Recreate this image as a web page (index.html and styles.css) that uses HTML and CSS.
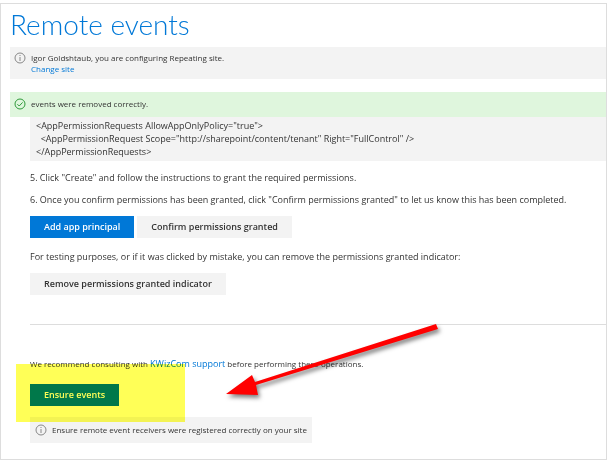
FILE: index.html
```
<!DOCTYPE html>
<html lang="en">
<head>
    <meta charset="UTF-8">
    <meta name="viewport" content="width=device-width, initial-scale=1.0">
    <title>Remote events</title>
    <link rel="stylesheet" href="styles.css">
</head>
<body>
    <main class="page">
        <h1>Remote events</h1>

        <!-- Messages -->
        <div class="message info">
            <svg class="icon" viewBox="0 0 12 12">
                <circle cx="6" cy="6" r="5" />
                <path d="M6 5v4M6 3v1" />
            </svg>
            <div>
                Igor Goldshtaub, you are configuring Repeating site.<br>
                <a href="#">Change site</a>
            </div>
        </div>
        <div class="message success">
            <svg class="icon" viewBox="0 0 12 12">
                <circle cx="6" cy="6" r="5" />
                <path d="M3.4 6.2l1.8 1.8 3.4-3.6" />
            </svg>
            <div>events were removed correctly.</div>
        </div>

        <!-- Permission steps -->
        <div class="content">
            <pre class="code">&lt;AppPermissionRequests AllowAppOnlyPolicy="true"&gt;
  &lt;AppPermissionRequest Scope="http://sharepoint/content/tenant" Right="FullControl" /&gt;
&lt;/AppPermissionRequests&gt;</pre>
            <p>5. Click "Create" and follow the instructions to grant the required permissions.</p>
            <p>6. Once you confirm permissions has been granted, click "Confirm permissions granted" to let us know this has been completed.</p>
            <div class="buttons">
                <button type="button" class="primary">Add app principal</button>
                <button type="button">Confirm permissions granted</button>
            </div>
            <p>For testing purposes, or if it was clicked by mistake, you can remove the permissions granted indicator:</p>
            <div class="buttons">
                <button type="button">Remove permissions granted indicator</button>
            </div>
            <hr>

            <!-- Support operations -->
            <div class="operations">
                <p class="recommend">We recommend consulting with <a href="#">KWizCom support</a> before performing these operations.</p>
                <button type="button" class="primary">Ensure events</button>
                <div class="hint">
                    <svg class="icon" viewBox="0 0 12 12">
                        <circle cx="6" cy="6" r="5" />
                        <path d="M6 5v4M6 3v1" />
                    </svg>
                    <span>Ensure remote event receivers were registered correctly on your site</span>
                </div>
                <div class="marker"></div>
                <svg class="arrow" viewBox="0 0 220 76">
                    <path d="M210 0l2 5L30 61l2 10L0 70 26 51l3 7z" />
                </svg>
            </div>
        </div>
    </main>
</body>
</html>
```
FILE: styles.css
```
body {
    margin: 3px 4px 3px 0;
    font-family: "Open Sans", "Noto Sans", sans-serif;
    font-size: 9px;
    line-height: 14px;
    color: #333;
    background-color: #fff;
}
.page {
    padding: 0 0 16px 9px;
    border: 1px solid #ddd;
}
h1 {
    margin: 0 0 3px;
    font-family: Lato, "Open Sans", sans-serif;
    font-size: 28px;
    font-weight: 300;
    line-height: 40px;
    color: #0078d7;
}
a {
    color: #0078d7;
    text-decoration: none;
}
.message {
    display: flex;
    gap: 5px;
    padding: 5px 4px;
    font-size: 8px;
    line-height: 11px;
}
.icon {
    flex: none;
    width: 12px;
    height: 12px;
    fill: none;
    stroke: #888;
}
.info {
    margin-bottom: 13px;
    background-color: #f3f3f3;
}
.success {
    padding: 6px 4px 7px;
    background-color: #dff6dd;
}
.success .icon {
    stroke: #2f9a3a;
}
.content {
    padding-left: 20px;
}
.code {
    margin: 0;
    padding: 2px 6px 3px;
    font-family: inherit;
    line-height: 13px;
    background-color: #f3f3f3;
}
p {
    margin: 8px 0;
}
.code + p {
    margin-top: 10px;
}
.buttons {
    display: flex;
    gap: 3px;
    margin: 9px 0 12px;
}
button {
    padding: 4px 14px;
    border: 0;
    font-family: inherit;
    font-size: 9px;
    font-weight: 600;
    line-height: 14px;
    color: #333;
    background-color: #f3f3f3;
}
.primary {
    color: #fff;
    background-color: #0078d7;
}
hr {
    margin: 29px 0 0;
    border: 0;
    border-top: 1px solid #ddd;
}
.operations {
    position: relative;
    padding-top: 31px;
}
.recommend {
    margin: 0 0 12px;
    font-size: 8px;
    line-height: 16px;
}
.recommend a {
    font-size: 9px;
}
.operations button {
    display: block;
}
.hint {
    display: flex;
    gap: 5px;
    align-items: center;
    width: fit-content;
    margin-top: 11px;
    padding: 5px;
    font-size: 8px;
    line-height: 16px;
    background-color: #f3f3f3;
}
.marker {
    position: absolute;
    top: 39px;
    left: -14px;
    width: 169px;
    height: 58px;
    background-color: #ffff57;
    mix-blend-mode: multiply;
}
.arrow {
    position: absolute;
    top: -1px;
    left: 196px;
    width: 220px;
    height: 76px;
    fill: #f00;
    filter: drop-shadow(2px 3px 2px rgba(0, 0, 0, 0.5));
}
```
